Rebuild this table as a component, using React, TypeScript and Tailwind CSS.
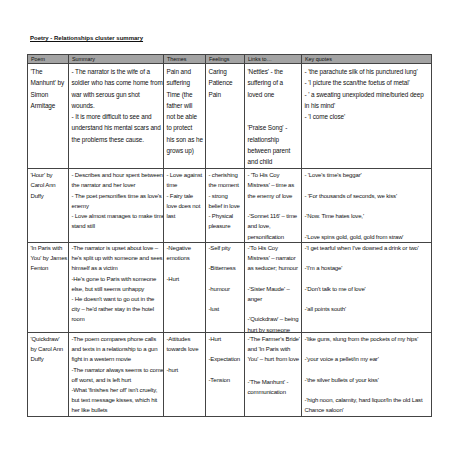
type Row = {
  h: string;
  pt: string;
  lh: string;
  quote: string;
  cells: string[][];
};

const body = "[font-family:'Liberation_Sans',Arial,sans-serif]";

const rows: Row[] = [
  {
    h: "h-[105px]",
    pt: "pt-[2px]",
    lh: "leading-[11.3px] text-[6.4px] tracking-[-0.1px]",
    quote: "",
    cells: [
      ["'The", "Manhunt' by", "Simon", "Armitage"],
      [
        "- The narrator is the wife of a",
        "soldier who has come home from",
        "war with serous gun shot",
        "wounds.",
        "- It is more difficult to see and",
        "understand his mental scars and",
        "the problems these cause.",
      ],
      ["Pain and", "suffering", "Time (the", "father will", "not be able", "to protect", "his son as he", "grows up)"],
      ["Caring", "Patience", "Pain"],
      ["'Nettles'  - the", "suffering of a", "loved one", "", "", "'Praise Song' -", "relationship", "between parent", "and child"],
      [
        "- 'the parachute silk of his punctured lung'",
        "- 'I picture the scan/the foetus of metal'",
        "- ' a sweating unexploded mine/buried deep",
        "in his mind'",
        "- 'I come close'",
      ],
    ],
  },
  {
    h: "h-[74px]",
    pt: "pt-[1px]",
    lh: "leading-[10.3px] text-[6px] tracking-[-0.15px]",
    quote: "text-[5.2px] tracking-[-0.05px]",
    cells: [
      ["'Hour' by", "Carol Ann", "Duffy"],
      [
        "- Describes and hour spent between",
        "the narrator and her lover",
        "- The poet personifies time as love's",
        "enemy",
        "- Love almost manages to make time",
        "stand still",
      ],
      ["- Love against", "time", "- Fairy tale", "love does not", "last"],
      ["- cherishing", "the moment", "- strong", "belief in love", "- Physical", "pleasure"],
      ["- 'To His Coy", "Mistress' – time as", "the enemy of love", "", "-'Sonnet 116' – time", "and love,", "personification"],
      [
        "- 'Love's time's beggar'",
        "",
        "- 'For thousands of seconds, we kiss'",
        "",
        "-'Now.  Time hates love,'",
        "",
        "-'Love spins gold, gold, gold from straw'",
      ],
    ],
  },
  {
    h: "h-[90px]",
    pt: "pt-0",
    lh: "leading-[10.2px] text-[6px] tracking-[-0.15px]",
    quote: "text-[5.2px] tracking-[-0.05px]",
    cells: [
      ["'In Paris with", "You' by James", "Fenton"],
      [
        "-The narrator is upset about love –",
        "he's split up with someone and sees",
        "himself as a victim",
        "-He's gone to Paris with someone",
        "else, but still seems unhappy",
        "- He doesn't want to go out in the",
        "city – he'd rather stay in the hotel",
        "room",
      ],
      ["-Negative", "emotions", "", "-Hurt"],
      ["-Self pity", "", "-Bitterness", "", "-humour", "", "-lust"],
      [
        "-'To His Coy",
        "Mistress' – narrator",
        "as seducer; humour",
        "",
        "-'Sister Maude' –",
        "anger",
        "",
        "-'Quickdraw' – being",
        "hurt by someone",
      ],
      [
        "-'I get tearful when I've downed a drink or two'",
        "",
        "-'I'm a hostage'",
        "",
        "-'Don't talk to me of love'",
        "",
        "-'all points south'",
      ],
    ],
  },
  {
    h: "h-[84px]",
    pt: "pt-[1px]",
    lh: "leading-[10.2px] text-[6px] tracking-[-0.15px]",
    quote: "text-[5.2px] tracking-[-0.05px]",
    cells: [
      ["'Quickdraw'", "by Carol Ann", "Duffy"],
      [
        "-The poem compares phone calls",
        "and texts in a relationship to a gun",
        "fight in a western movie",
        "-The narrator always seems to come",
        "off worst, and is left hurt",
        "-What 'finishes her off' isn't cruelty,",
        "but text message kisses, which hit",
        "her like bullets",
      ],
      ["-Attitudes", "towards love", "", "-hurt"],
      ["-Hurt", "", "-Expectation", "", "-Tension"],
      ["-'The Farmer's Bride'", "and 'In Paris with", "You' – hurt from love", "", "-'The Manhunt' -", "communication"],
      [
        "-'like guns, slung from the pockets of my hips'",
        "",
        "-'your voice a pellet/in my ear'",
        "",
        "-'the silver bullets of your  kiss'",
        "",
        "-'high noon, calamity, hard liquor/In the old Last",
        "Chance saloon'",
      ],
    ],
  },
];

const headers = ["Poem", "Summary", "Themes", "Feelings", "Links to…", "Key quotes"];

export default function App() {
  return (
    <div className={`w-[453px] h-[453px] bg-white text-[#111] overflow-hidden ${body}`}>
      <div className="pl-[30px] pt-[34px] h-[54px] text-[6px] font-bold leading-[9px]">
        <div className="underline">Poetry - Relationships cluster summary</div>
      </div>

      <div className="ml-[27px] w-[405px] grid grid-cols-[41px_95px_42px_39px_57px_130px] border-l border-t border-[#444]">
        {headers.map((h) => (
          <div
            key={h}
            className="h-[9px] bg-[#a3a3a3] border-r border-b border-[#444] px-[3px] text-[5.4px] leading-[8px] whitespace-nowrap"
          >
            {h}
          </div>
        ))}

        {rows.map((r, i) =>
          r.cells.map((lines, j) => (
            <div
              key={i + "-" + j}
              className={`${r.h} ${r.pt} ${r.lh} ${j === 5 ? r.quote : ""} border-r border-b border-[#444] px-[2.5px] whitespace-nowrap overflow-hidden`}
            >
              {lines.map((l, k) => (
                <div key={k} className={i === 3 && j === 4 && k === 4 ? "mt-[2px]" : ""}>
                  {l === "" ? "\u00a0" : l}
                </div>
              ))}
            </div>
          ))
        )}
      </div>
    </div>
  );
}
